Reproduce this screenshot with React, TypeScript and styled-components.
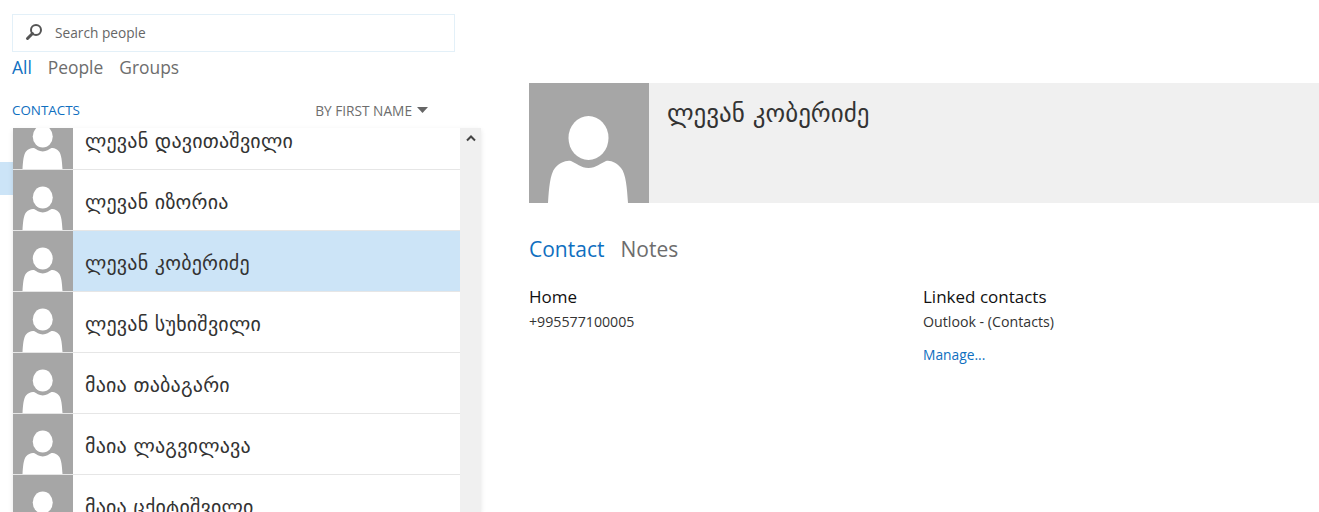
import React from 'react';
import styled, { createGlobalStyle } from 'styled-components';

const GlobalStyle = createGlobalStyle`
    html, body {
        margin: 0;
        padding: 0;
        height: 100%;
        overflow: hidden;
        background: #fff;
    }
    body {
        font-family: "Open Sans", "Noto Sans", "DejaVu Sans", sans-serif;
    }
`

const Page = styled.div`
    display: flex;
    width: 1319px;
    height: 512px;
    overflow: hidden;
`

const Sidebar = styled.div`
    display: flex;
    flex-direction: column;
    width: 481px;
    flex-shrink: 0;
    padding-top: 14px;
`

const SearchBox = styled.div`
    display: flex;
    align-items: center;
    box-sizing: border-box;
    width: 443px;
    height: 38px;
    margin-left: 12px;
    padding: 0 0 2px 12px;
    border: 1px solid #e3f0f8;
    font-size: 13.7px;
    color: #666;
`

const SearchLabel = styled.span`
    margin-left: 12px;
`

const Tabs = styled.div<{ $gap: number; $size: number }>`
    display: flex;
    gap: ${(props) => props.$gap}px;
    font-size: ${(props) => props.$size}px;
    line-height: 1.35;
`

const Tab = styled.span<{ $active?: boolean }>`
    color: ${(props) => (props.$active ? '#0f6fc0' : '#6d6d6d')};
`

const SidebarTabs = styled(Tabs)`
    margin: 4px 0 0 12px;
    height: 25px;
`

const ListHeader = styled.div`
    display: flex;
    justify-content: space-between;
    align-items: center;
    height: 20px;
    margin: 19px 53px 8px 12px;
    font-size: 13.4px;
`

const ContactsLabel = styled.span`
    color: #0f6fc0;
`

const SortLabel = styled.span`
    display: flex;
    align-items: center;
    gap: 5px;
    color: #6d6d6d;
    font-size: 13.7px;
`

const ListArea = styled.div`
    display: flex;
    flex: 1;
    min-height: 0;
`

const Marker = styled.div`
    width: 13px;
    height: 33px;
    margin-top: 34px;
    flex-shrink: 0;
    background: #cce4f7;
`

const ListFrame = styled.div`
    display: flex;
    width: 468px;
    box-shadow: 0 2px 5px rgba(0, 0, 0, 0.1);
    overflow: hidden;
`

const List = styled.div`
    flex: 1;
    min-width: 0;
    overflow: hidden;
`

const ListScroll = styled.div`
    margin-top: -19px;
`

const Row = styled.div<{ $selected?: boolean }>`
    display: flex;
    align-items: center;
    height: 60px;
    border-bottom: 1px solid #e6e6e6;
    background: ${(props) => (props.$selected ? '#cce4f7' : '#fff')};
    font-family: "DejaVu Sans", sans-serif;
    font-size: 20px;
    letter-spacing: 0.2px;
    color: #333;
`

const RowAvatar = styled.svg`
    display: block;
    width: 60px;
    height: 60px;
    flex-shrink: 0;
`

const RowName = styled.span`
    margin-left: 12px;
    padding-top: 3px;
    white-space: nowrap;
`

const Scrollbar = styled.div`
    display: flex;
    justify-content: center;
    width: 21px;
    flex-shrink: 0;
    padding-top: 7px;
    background: #f0f0f0;
`

const Detail = styled.div`
    flex: 1;
    min-width: 0;
    padding: 83px 0 0 48px;
`

const Hero = styled.div`
    display: flex;
    height: 120px;
    background: #f0f0f0;
`

const HeroAvatar = styled.svg`
    display: block;
    width: 120px;
    height: 120px;
    flex-shrink: 0;
`

const HeroName = styled.h1`
    margin: 15px 0 0 18px;
    font-family: "DejaVu Sans", sans-serif;
    font-size: 25px;
    font-weight: 400;
    line-height: 32px;
    color: #333;
`

const DetailTabs = styled(Tabs)`
    margin-top: 32px;
`

const Columns = styled.div`
    display: flex;
    margin-top: 22px;
`

const Column = styled.div`
    width: 394px;
`

const FieldTitle = styled.div`
    font-size: 17px;
    line-height: 24px;
    color: #111;
`

const FieldValue = styled.div`
    margin-top: 3px;
    font-size: 14.2px;
    line-height: 20px;
    color: #333;
`

const ManageLink = styled.a`
    display: block;
    margin-top: 13px;
    font-size: 13.8px;
    line-height: 20px;
    color: #0f6fc0;
`

const people = [
    'ლევან დავითაშვილი',
    'ლევან იზორია',
    'ლევან კობერიძე',
    'ლევან სუხიშვილი',
    'მაია თაბაგარი',
    'მაია ლაგვილავა',
    'მაია ცქიტიშვილი',
];

const PersonShape = () => (
    <>
        <rect width="120" height="120" fill="#a6a6a6" />
        <ellipse cx="59.5" cy="55" rx="20" ry="22" fill="#fff" />
        <path
            d="M19 120 C20 105 21 91 26 85 C30 80 37 77 42 78 C47 80 52 85 59.5 85 C67 85 72 80 77 78 C82 77 88 80 92 85 C97 91 98 105 99 120 Z"
            fill="#fff"
        />
    </>
);

const App: React.FC = () => {
    const selected = 'ლევან კობერიძე';

    return (
        <Page>
            <GlobalStyle />
            <Sidebar>
                <SearchBox>
                    <svg width="18" height="18" viewBox="0 0 18 18">
                        <circle cx="11" cy="7" r="5" fill="none" stroke="#555" strokeWidth="2" />
                        <path d="M7.5 10.5 L2.5 15.5" stroke="#555" strokeWidth="3" strokeLinecap="round" />
                    </svg>
                    <SearchLabel>Search people</SearchLabel>
                </SearchBox>
                <SidebarTabs $gap={16} $size={17.4}>
                    <Tab $active>All</Tab>
                    <Tab>People</Tab>
                    <Tab>Groups</Tab>
                </SidebarTabs>
                <ListHeader>
                    <ContactsLabel>CONTACTS</ContactsLabel>
                    <SortLabel>
                        BY FIRST NAME
                        <svg width="11" height="6" viewBox="0 0 11 6">
                            <path d="M0 0 H11 L5.5 6 Z" fill="#666" />
                        </svg>
                    </SortLabel>
                </ListHeader>
                <ListArea>
                    <Marker />
                    <ListFrame>
                        <List>
                            <ListScroll>
                                {people.map((name) => (
                                    <Row key={name} $selected={name === selected}>
                                        <RowAvatar viewBox="0 0 120 120">
                                            <PersonShape />
                                        </RowAvatar>
                                        <RowName>{name}</RowName>
                                    </Row>
                                ))}
                            </ListScroll>
                        </List>
                        <Scrollbar>
                            <svg width="10" height="7" viewBox="0 0 10 7">
                                <path d="M1 5.5 L5 1.5 L9 5.5" fill="none" stroke="#444" strokeWidth="2" />
                            </svg>
                        </Scrollbar>
                    </ListFrame>
                </ListArea>
            </Sidebar>
            <Detail>
                <Hero>
                    <HeroAvatar viewBox="0 0 120 120">
                        <PersonShape />
                    </HeroAvatar>
                    <HeroName>{selected}</HeroName>
                </Hero>
                <DetailTabs $gap={16} $size={21}>
                    <Tab $active>Contact</Tab>
                    <Tab>Notes</Tab>
                </DetailTabs>
                <Columns>
                    <Column>
                        <FieldTitle>Home</FieldTitle>
                        <FieldValue>+995577100005</FieldValue>
                    </Column>
                    <Column>
                        <FieldTitle>Linked contacts</FieldTitle>
                        <FieldValue>Outlook - (Contacts)</FieldValue>
                        <ManageLink>Manage...</ManageLink>
                    </Column>
                </Columns>
            </Detail>
        </Page>
    );
};

export default App;
